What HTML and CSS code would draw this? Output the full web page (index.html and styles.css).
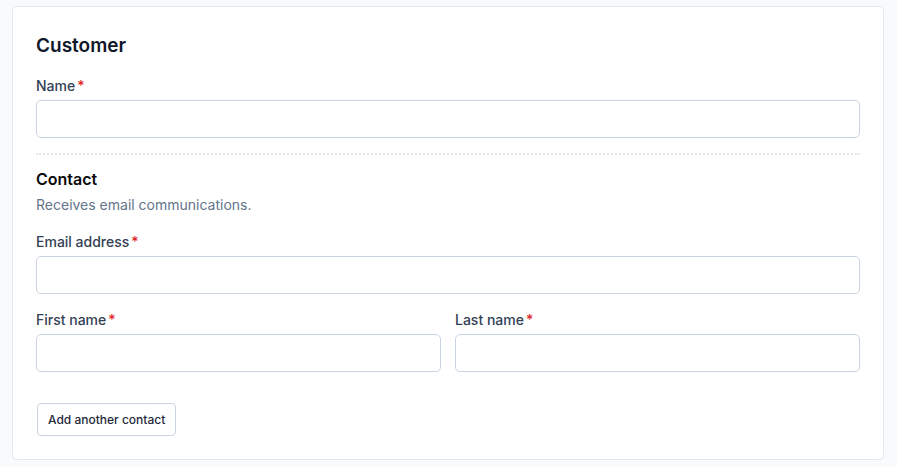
FILE: index.html
```html
<!DOCTYPE html>
<html lang="en">
<head>
    <meta charset="UTF-8">
    <meta name="viewport" content="width=device-width, initial-scale=1.0">
    <title>Customer</title>
    <link rel="stylesheet" href="styles.css">
</head>
<body>
    <form class="card">
        <h2 class="card-title">Customer</h2>

        <div class="field">
            <label class="label" for="name">Name<span class="req">*</span></label>
            <input class="input" id="name" type="text">
        </div>

        <hr class="divider">

        <div class="section">
            <h3 class="section-title">Contact</h3>
            <p class="section-desc">Receives email communications.</p>
        </div>

        <div class="field field-first">
            <label class="label" for="email">Email address<span class="req">*</span></label>
            <input class="input" id="email" type="email">
        </div>

        <div class="row">
            <div class="field">
                <label class="label" for="first">First name<span class="req">*</span></label>
                <input class="input" id="first" type="text">
            </div>
            <div class="field">
                <label class="label" for="last">Last name<span class="req">*</span></label>
                <input class="input" id="last" type="text">
            </div>
        </div>

        <div class="actions">
            <button type="button" class="btn">Add another contact</button>
        </div>
    </form>
</body>
</html>
```

FILE: styles.css
```css
body {
    margin: 0;
    padding: 6px 13px 7px 12px;
    background-color: #f8fafc;
    font-family: Inter, "Noto Sans", sans-serif;
    color: #334155;
}
.card {
    background-color: #fff;
    border: 1px solid #e2e8f0;
    border-radius: 5px;
    padding: 25px 23px 23px 23px;
    display: flex;
    flex-direction: column;
}
.card-title {
    margin: 0;
    font-size: 19px;
    line-height: 28px;
    font-weight: 600;
    color: #0f172a;
}
.field {
    display: flex;
    flex-direction: column;
    margin-top: 16px;
    flex: 1;
}
.field-first {
    margin-top: 17px;
}
.label {
    font-size: 14px;
    line-height: 20px;
    font-weight: 500;
    color: #334155;
    margin-bottom: 4px;
}
.req {
    color: #dc2626;
    margin-left: 2px;
}
.input {
    height: 38px;
    box-sizing: border-box;
    border: 1px solid #cbd5e1;
    border-radius: 5px;
    background: #fff;
    font-family: inherit;
    font-size: 14px;
    padding: 0 10px;
    margin: 0;
}
.divider {
    border: none;
    border-top: 2px dotted #e2e8f0;
    margin: 15px 0 0 0;
}
.section {
    margin-top: 12px;
}
.section-title {
    margin: 0;
    font-size: 16px;
    line-height: 24px;
    font-weight: 600;
    color: #0a0a0a;
}
.section-desc {
    margin: 4px 0 0 0;
    font-size: 14px;
    line-height: 20px;
    color: #64748b;
}
.row {
    display: flex;
    gap: 14px;
}
.actions {
    margin-top: 31px;
}
.btn {
    height: 33px;
    padding: 0 10px;
    margin-left: 1px;
    background: #fff;
    border: 1px solid #cbd5e1;
    border-radius: 4px;
    font-family: inherit;
    font-size: 12px;
    font-weight: 500;
    color: #1e293b;
    cursor: pointer;
}
```
